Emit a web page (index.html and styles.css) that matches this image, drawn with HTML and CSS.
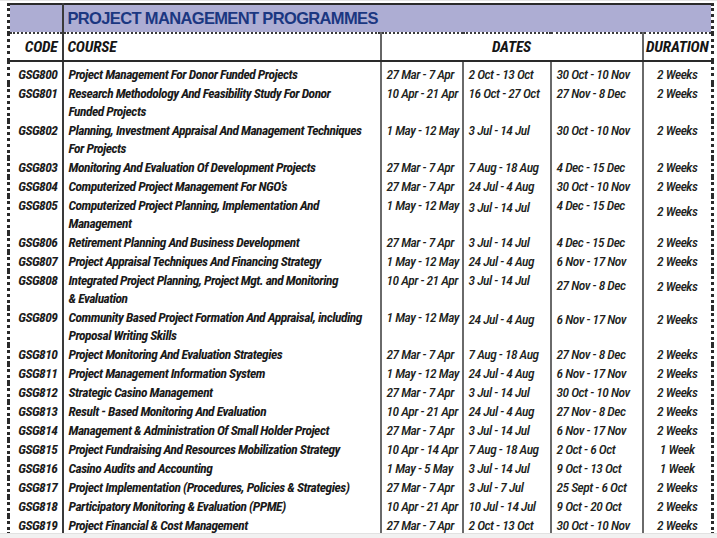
FILE: index.html
```html
<!DOCTYPE html>
<html lang="en">
<head>
<meta charset="utf-8">
<title>Project Management Programmes</title>
<link rel="stylesheet" href="styles.css">
</head>
<body>
<div class="page">
<table class="prog">
<colgroup>
<col class="c-code"><col class="c-course"><col class="c-d1"><col class="c-d2"><col class="c-d3"><col class="c-dur">
</colgroup>
<thead>
<tr class="title-row"><th class="blank"></th><th colspan="5" class="title">PROJECT MANAGEMENT PROGRAMMES</th></tr>
<tr class="head-row"><th class="code">CODE</th><th class="course">COURSE</th><th colspan="3" class="dates">DATES</th><th class="dur">DURATION</th></tr>
</thead>
<tbody>
<tr class="first"><td class="code">GSG800</td><td class="course">Project Management For Donor Funded Projects</td><td>27 Mar - 7 Apr</td><td>2 Oct - 13 Oct</td><td>30 Oct - 10 Nov</td><td class="dur">2 Weeks</td></tr>
<tr><td class="code">GSG801</td><td class="course">Research Methodology And Feasibility Study For Donor<br>Funded Projects</td><td>10 Apr - 21 Apr</td><td>16 Oct - 27 Oct</td><td>27 Nov - 8 Dec</td><td class="dur">2 Weeks</td></tr>
<tr><td class="code">GSG802</td><td class="course">Planning, Investment Appraisal And Management Techniques<br>For Projects</td><td>1 May - 12 May</td><td>3 Jul - 14 Jul</td><td>30 Oct - 10 Nov</td><td class="dur">2 Weeks</td></tr>
<tr><td class="code">GSG803</td><td class="course">Monitoring And Evaluation Of Development Projects</td><td>27 Mar - 7 Apr</td><td>7 Aug - 18 Aug</td><td>4 Dec - 15 Dec</td><td class="dur">2 Weeks</td></tr>
<tr><td class="code">GSG804</td><td class="course">Computerized Project Management For NGO’s</td><td>27 Mar - 7 Apr</td><td>24 Jul - 4 Aug</td><td>30 Oct - 10 Nov</td><td class="dur">2 Weeks</td></tr>
<tr><td class="code">GSG805</td><td class="course">Computerized Project Planning, Implementation And<br>Management</td><td>1 May - 12 May</td><td class="dn2">3 Jul - 14 Jul</td><td>4 Dec - 15 Dec</td><td class="dur dn6">2 Weeks</td></tr>
<tr><td class="code">GSG806</td><td class="course">Retirement Planning And Business Development</td><td>27 Mar - 7 Apr</td><td>3 Jul - 14 Jul</td><td>4 Dec - 15 Dec</td><td class="dur">2 Weeks</td></tr>
<tr><td class="code">GSG807</td><td class="course">Project Appraisal Techniques And Financing Strategy</td><td>1 May - 12 May</td><td>24 Jul - 4 Aug</td><td>6 Nov - 17 Nov</td><td class="dur">2 Weeks</td></tr>
<tr><td class="code">GSG808</td><td class="course">Integrated Project Planning, Project Mgt. and Monitoring<br>&amp; Evaluation</td><td>10 Apr - 21 Apr</td><td>3 Jul - 14 Jul</td><td class="dn5">27 Nov - 8 Dec</td><td class="dur dn6">2 Weeks</td></tr>
<tr><td class="code">GSG809</td><td class="course">Community Based Project Formation And Appraisal, including<br>Proposal Writing Skills</td><td>1 May - 12 May</td><td class="dn2">24 Jul - 4 Aug</td><td class="dn2">6 Nov - 17 Nov</td><td class="dur dn2">2 Weeks</td></tr>
<tr><td class="code">GSG810</td><td class="course">Project Monitoring And Evaluation Strategies</td><td>27 Mar - 7 Apr</td><td>7 Aug - 18 Aug</td><td>27 Nov - 8 Dec</td><td class="dur">2 Weeks</td></tr>
<tr><td class="code">GSG811</td><td class="course">Project Management Information System</td><td>1 May - 12 May</td><td>24 Jul - 4 Aug</td><td>6 Nov - 17 Nov</td><td class="dur">2 Weeks</td></tr>
<tr><td class="code">GSG812</td><td class="course">Strategic Casino Management</td><td>27 Mar - 7 Apr</td><td>3 Jul - 14 Jul</td><td>30 Oct - 10 Nov</td><td class="dur">2 Weeks</td></tr>
<tr><td class="code">GSG813</td><td class="course">Result - Based Monitoring And Evaluation</td><td>10 Apr - 21 Apr</td><td>24 Jul - 4 Aug</td><td>27 Nov - 8 Dec</td><td class="dur">2 Weeks</td></tr>
<tr><td class="code">GSG814</td><td class="course">Management &amp; Administration Of Small Holder Project</td><td>27 Mar - 7 Apr</td><td>3 Jul - 14 Jul</td><td>6 Nov - 17 Nov</td><td class="dur">2 Weeks</td></tr>
<tr><td class="code">GSG815</td><td class="course">Project Fundraising And Resources Mobilization Strategy</td><td>10 Apr - 14 Apr</td><td>7 Aug - 18 Aug</td><td>2 Oct - 6 Oct</td><td class="dur">1 Week</td></tr>
<tr><td class="code">GSG816</td><td class="course">Casino Audits and Accounting</td><td>1 May - 5 May</td><td>3 Jul - 14 Jul</td><td>9 Oct - 13 Oct</td><td class="dur">1 Week</td></tr>
<tr><td class="code">GSG817</td><td class="course">Project Implementation (Procedures, Policies &amp; Strategies)</td><td>27 Mar - 7 Apr</td><td>3 Jul - 7 Jul</td><td>25 Sept - 6 Oct</td><td class="dur">2 Weeks</td></tr>
<tr><td class="code">GSG818</td><td class="course">Participatory Monitoring &amp; Evaluation (PPME)</td><td>10 Apr - 21 Apr</td><td>10 Jul - 14 Jul</td><td>9 Oct - 20 Oct</td><td class="dur">2 Weeks</td></tr>
<tr><td class="code">GSG819</td><td class="course">Project Financial &amp; Cost Management</td><td>27 Mar - 7 Apr</td><td>2 Oct - 13 Oct</td><td>30 Oct - 10 Nov</td><td class="dur">2 Weeks</td></tr>
</tbody>
</table>
</div>
<div class="footer-bar"></div>
</body>
</html>
```
FILE: styles.css
```css
html, body {
  margin: 0;
  padding: 0;
  background: #ffffff;
}
body {
  font-family: "Roboto Condensed", "DejaVu Sans Condensed", "Liberation Sans", sans-serif;
  color: #1e1e1e;
}
.page {
  height: 533px;
  overflow: hidden;
  border-top: 1px solid #e4e4e4;
  padding: 2px 0 0 7px;
  box-sizing: border-box;
}
.footer-bar {
  height: 5px;
  background: #f1f1f1;
  border-top: 1px solid #e2e2e2;
}
.prog {
  border-collapse: collapse;
  table-layout: fixed;
  width: 707px;
  border-top: 2px solid #2a2a2a;
  border-left: 3px dotted #2a2a2a;
  border-right: 3px dotted #2a2a2a;
}
.c-code { width: 54px; }
.c-course { width: 318px; }
.c-d1 { width: 82px; }
.c-d2 { width: 88px; }
.c-d3 { width: 92px; }
.c-dur { width: 70px; }

.prog th, .prog td {
  padding: 0;
  font-weight: bold;
  font-style: italic;
  white-space: nowrap;
  overflow: hidden;
}
.title-row th {
  background: #adadd3;
  height: 27px;
  border-bottom: 2px dotted #3a3a3a;
}
.title-row .blank {
  border-right: 2px solid #3a3a3a;
}
.title-row .title {
  text-align: left;
  font-family: "Liberation Sans", sans-serif;
  font-style: normal;
  font-size: 16.5px;
  color: #1b3781;
  padding-left: 4px;
  letter-spacing: -0.65px;
}
.head-row th {
  height: 26px;
  font-size: 15.5px;
  color: #151515;
  letter-spacing: -0.2px;
  border-bottom: 2px solid #2a2a2a;
}
.head-row .code {
  text-align: right;
  padding-right: 4px;
  border-right: 2px solid #3a3a3a;
}
.head-row .course {
  text-align: left;
  padding-left: 4px;
  border-right: 2px solid #666;
}
.head-row .dates {
  text-align: center;
  border-right: 2px solid #666;
}
.head-row .dur {
  text-align: center;
}

.prog td {
  vertical-align: top;
  font-size: 13.5px;
  line-height: 18px;
  letter-spacing: -0.5px;
  font-weight: 500;
  border-right: 2px solid #6a6a6a;
  color: #221f1d;
  padding: 0 0 1px 5px;
}
.prog td.code {
  text-align: right;
  padding: 0 4px 1px 0;
  font-weight: bold;
  letter-spacing: -0.5px;
  color: #1c1c1c;
  border-right: 2px solid #3a3a3a;
}
.prog td.course {
  font-weight: bold;
  letter-spacing: -0.5px;
  color: #1a1a1a;
}
.prog td.dur {
  text-align: center;
  padding-left: 0;
  border-right: none;
}
.prog tr.first td {
  padding-top: 3px;
}
.prog td.dn2 { padding-top: 2px; padding-bottom: 0; }
.prog td.dn5 { padding-top: 5px; padding-bottom: 0; }
.prog td.dn6 { padding-top: 6px; padding-bottom: 0; }
```
